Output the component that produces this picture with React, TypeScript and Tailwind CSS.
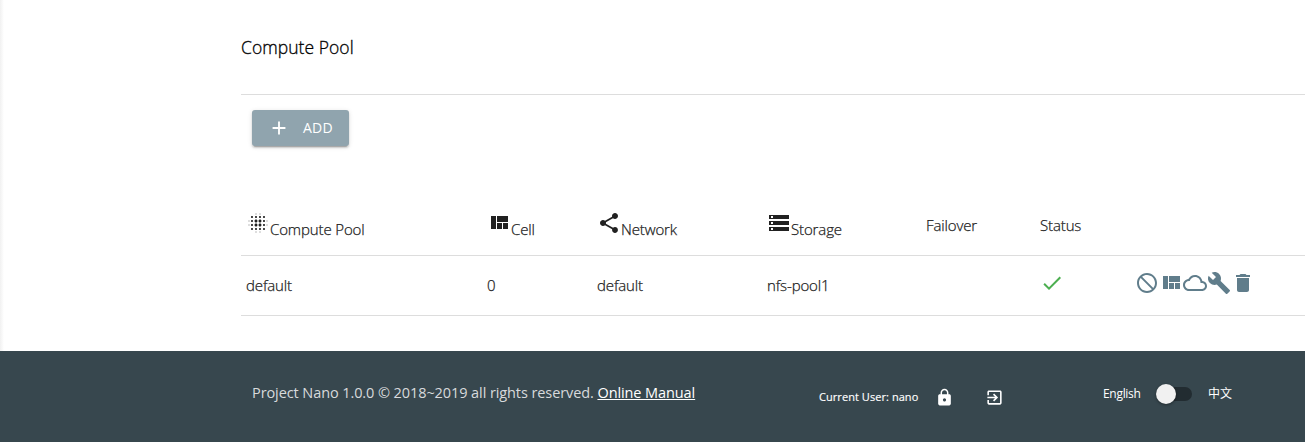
import type { ReactNode } from "react";

const paths = {
  add: "M19 13h-6v6h-2v-6H5v-2h6V5h2v6h6v2z",
  blur: "M6 13c-.55 0-1 .45-1 1s.45 1 1 1 1-.45 1-1-.45-1-1-1zm0 4c-.55 0-1 .45-1 1s.45 1 1 1 1-.45 1-1-.45-1-1-1zm0-8c-.55 0-1 .45-1 1s.45 1 1 1 1-.45 1-1-.45-1-1-1zm-3 .5c-.28 0-.5.22-.5.5s.22.5.5.5.5-.22.5-.5-.22-.5-.5-.5zM6 5c-.55 0-1 .45-1 1s.45 1 1 1 1-.45 1-1-.45-1-1-1zm15 5.5c.28 0 .5-.22.5-.5s-.22-.5-.5-.5-.5.22-.5.5.22.5.5.5zM14 7c.55 0 1-.45 1-1s-.45-1-1-1-1 .45-1 1 .45 1 1 1zm0-3.500c.28 0 .5-.22.5-.5s-.22-.5-.5-.5-.5.22-.5.5.22.5.5.5zm-11 10c-.28 0-.5.22-.5.5s.22.5.5.5.5-.22.5-.5-.22-.5-.5-.5zm7 7c-.28 0-.5.22-.5.5s.22.5.5.5.5-.22.5-.5-.22-.5-.5-.5zm0-17c.28 0 .5-.22.5-.5s-.22-.5-.5-.5-.5.22-.5.5.22.5.5.5zM10 7c.55 0 1-.45 1-1s-.45-1-1-1-1 .45-1 1 .45 1 1 1zm0 5.500c-.83 0-1.500.67-1.500 1.500s.67 1.500 1.500 1.500 1.500-.67 1.500-1.500-.67-1.500-1.500-1.500zm8 .5c-.55 0-1 .45-1 1s.45 1 1 1 1-.45 1-1-.45-1-1-1zm0 4c-.55 0-1 .45-1 1s.45 1 1 1 1-.45 1-1-.45-1-1-1zm0-8c-.55 0-1 .45-1 1s.45 1 1 1 1-.45 1-1-.45-1-1-1zm0-4c-.55 0-1 .45-1 1s.45 1 1 1 1-.45 1-1-.45-1-1-1zm3 8.500c-.28 0-.5.22-.5.5s.22.5.5.5.5-.22.5-.5-.22-.5-.5-.5zM14 17c-.55 0-1 .45-1 1s.45 1 1 1 1-.45 1-1-.45-1-1-1zm0 3.500c-.28 0-.5.22-.5.5s.22.5.5.5.5-.22.5-.5-.22-.5-.5-.5zm-4-12c-.83 0-1.500.67-1.500 1.500s.67 1.500 1.500 1.500 1.500-.67 1.500-1.500-.67-1.500-1.500-1.500zm0 8.500c-.55 0-1 .45-1 1s.45 1 1 1 1-.45 1-1-.45-1-1-1zm4-4.500c-.83 0-1.500.67-1.500 1.500s.67 1.500 1.500 1.500 1.500-.67 1.500-1.500-.67-1.500-1.500-1.500zm0-4c-.83 0-1.500.67-1.500 1.500s.67 1.500 1.500 1.500 1.500-.67 1.500-1.500-.67-1.500-1.500-1.500z",
  quilt: "M10 18h5v-6h-5v6zm-6 0h5V5H4v13zm12 0h5v-6h-5v6zM10 5v6h11V5H10z",
  share: "M18 16.08c-.76 0-1.44.3-1.96.77L8.91 12.7c.05-.23.09-.46.09-.7s-.04-.47-.09-.7l7.05-4.11c.54.5 1.25.81 2.04.81 1.66 0 3-1.34 3-3s-1.34-3-3-3-3 1.34-3 3c0 .24.04.47.09.7L8.04 9.81C7.500 9.31 6.790 9 6 9c-1.66 0-3 1.34-3 3s1.34 3 3 3c.79 0 1.500-.31 2.040-.81l7.120 4.160c-.05.21-.08.43-.08.65 0 1.610 1.310 2.920 2.920 2.920s2.920-1.310 2.920-2.920-1.310-2.920-2.920-2.920z",
  storage: "M2 20h20v-4H2v4zm2-3h2v2H4v-2zM2 4v4h20V4H2zm4 3H4V5h2v2zm-4 7h20v-4H2v4zm2-3h2v2H4v-2z",
  check: "M9 16.17L4.830 12l-1.420 1.410L9 19 21 7l-1.410-1.410z",
  block: "M12 2C6.480 2 2 6.480 2 12s4.480 10 10 10 10-4.480 10-10S17.520 2 12 2zm0 18c-4.420 0-8-3.580-8-8 0-1.850.63-3.550 1.690-4.900L16.900 18.310C15.550 19.370 13.850 20 12 20zm6.310-3.100L7.100 5.690C8.450 4.630 10.150 4 12 4c4.420 0 8 3.580 8 8 0 1.850-.63 3.550-1.690 4.900z",
  cloud: "M19.350 10.040C18.670 6.590 15.640 4 12 4 9.110 4 6.600 5.640 5.350 8.040 2.340 8.360 0 10.910 0 14c0 3.310 2.690 6 6 6h13c2.760 0 5-2.240 5-5 0-2.640-2.050-4.780-4.650-4.960zM19 18H6c-2.210 0-4-1.790-4-4s1.790-4 4-4h.71C7.370 7.690 9.480 6 12 6c3.040 0 5.500 2.460 5.500 5.500v.5H19c1.660 0 3 1.340 3 3s-1.340 3-3 3z",
  build: "M22.700 19l-9.100-9.100c.9-2.300.4-5-1.500-6.900-2-2-5-2.400-7.400-1.300L9 6 6 9 1.600 4.700C.4 7.100.9 10.100 2.900 12.100c1.900 1.900 4.600 2.400 6.900 1.500l9.100 9.100c.4.4 1 .4 1.400 0l2.300-2.300c.5-.4.5-1.100.1-1.400z",
  trash: "M6 19c0 1.100.9 2 2 2h8c1.100 0 2-.9 2-2V7H6v12zM19 4h-3.500l-1-1h-5l-1 1H5v2h14V4z",
  lock: "M18 8h-1V6c0-2.760-2.240-5-5-5S7 3.240 7 6v2H6c-1.100 0-2 .9-2 2v10c0 1.100.9 2 2 2h12c1.100 0 2-.9 2-2V10c0-1.100-.9-2-2-2zm-6 9c-1.100 0-2-.9-2-2s.9-2 2-2 2 .9 2 2-.9 2-2 2zm3.100-9H8.900V6c0-1.710 1.390-3.100 3.100-3.100 1.710 0 3.100 1.390 3.100 3.100v2z",
  exit: "M10.090 15.590L11.500 17l5-5-5-5-1.410 1.410L12.670 11H3v2h9.670l-2.580 2.590zM19 3H5c-1.110 0-2 .9-2 2v4h2V5h14v14H5v-4H3v4c0 1.100.89 2 2 2h14c1.100 0 2-.9 2-2V5c0-1.100-.9-2-2-2z",
};

function Icon({ name, className = "size-6" }: { name: keyof typeof paths; className?: string }) {
  return (
    <svg viewBox="0 0 24 24" fill="currentColor" className={`block shrink-0 ${className}`}>
      <path d={paths[name]} />
    </svg>
  );
}

const grid = "grid grid-cols-[241px_110px_170px_159px_114px_95px_1fr] pl-[5px] border-b border-[#dddddd]";

function Head({ icon, children }: { icon?: keyof typeof paths; children: ReactNode }) {
  return (
    <div className={icon ? "flex items-start pt-[15px]" : "flex items-start pt-[18px]"}>
      {icon && <Icon name={icon} />}
      <span className={icon ? "pt-[7px] leading-[22px]" : "leading-[22px]"}>{children}</span>
    </div>
  );
}

export default function App() {
  return (
    <div className="flex h-[442px] flex-col overflow-hidden bg-white bg-linear-to-r from-[#f1f1f1] to-white to-[4px] font-['Open_Sans','Noto_Sans_CJK_SC',sans-serif] whitespace-nowrap">
      <main className="ml-[241px] h-[351px] shrink-0">
        <header className="h-[95px] border-b border-[#dddddd] pt-[35px]">
          <h1 className="text-[17.500px] leading-6 font-light tracking-[0.05px] text-black [-webkit-text-stroke:0.3px_currentColor]">Compute Pool</h1>
        </header>
        <div className="h-[101px] pt-[15px] pl-[11px]">
          <button className="flex h-9 w-[97px] items-center rounded-[3px] bg-[#90a4ae] pl-[15.500px] text-sm text-white shadow-[0_2px_2px_0_#00000024,0_3px_1px_-2px_#00000033,0_1px_5px_0_#0000001f]">
            <Icon name="add" className="size-[22px]" />
            <span className="ml-[13.500px] tracking-[0.2px]">ADD</span>
          </button>
        </div>
        <section className="text-[15px] font-light tracking-[-0.13px] text-[#212121] [-webkit-text-stroke:0.25px_currentColor]">
          <div className={`${grid} h-[60px]`}>
            <Head icon="blur">Compute Pool</Head>
            <Head icon="quilt">Cell</Head>
            <Head icon="share">Network</Head>
            <Head icon="storage">Storage</Head>
            <Head>Failover</Head>
            <Head>Status</Head>
          </div>
          <div className={`${grid} h-[60px] items-center`}>
            <span>default</span>
            <span>0</span>
            <span>default</span>
            <span>nfs-pool1</span>
            <span />
            <Icon name="check" className="mb-[5px] size-6 text-[#4caf50]" />
            <div className="mb-[5px] flex text-[#607d8b]">
              <Icon name="block" />
              <Icon name="quilt" />
              <Icon name="cloud" />
              <Icon name="build" />
              <Icon name="trash" />
            </div>
          </div>
        </section>
      </main>
      <footer className="flex flex-1 items-start bg-[#37474e] pl-[252px] text-white">
        <p className="mt-[31px] w-[567px] text-[14.500px] leading-[22px] tracking-[-0.09px] text-[#d7dadc]">
          Project Nano 1.0.0 © 2018~2019 all rights reserved.{" "}
          <a href="#manual" className="text-white underline underline-offset-1">Online Manual</a>
        </p>
        <div className="mt-[36px] flex w-[284px] items-center text-[11px] leading-5">
          <span className="w-[115.500px] tracking-[0.06px] [-webkit-text-stroke:0.15px_currentColor]">Current User: nano</span>
          <Icon name="lock" className="size-[19px]" />
          <Icon name="exit" className="ml-[31px] size-[19px]" />
        </div>
        <div className="mt-[33px] flex items-center text-[12px] leading-5">
          <span className="w-[53px] tracking-[-0.3px]">English</span>
          <span className="flex h-[14px] w-9 items-center rounded-full bg-[#222c31]">
            <span className="size-5 shrink-0 rounded-full bg-[#f1f1f1] shadow-[0_1px_3px_#00000066]" />
          </span>
          <span className="ml-4">中文</span>
        </div>
      </footer>
    </div>
  );
}
